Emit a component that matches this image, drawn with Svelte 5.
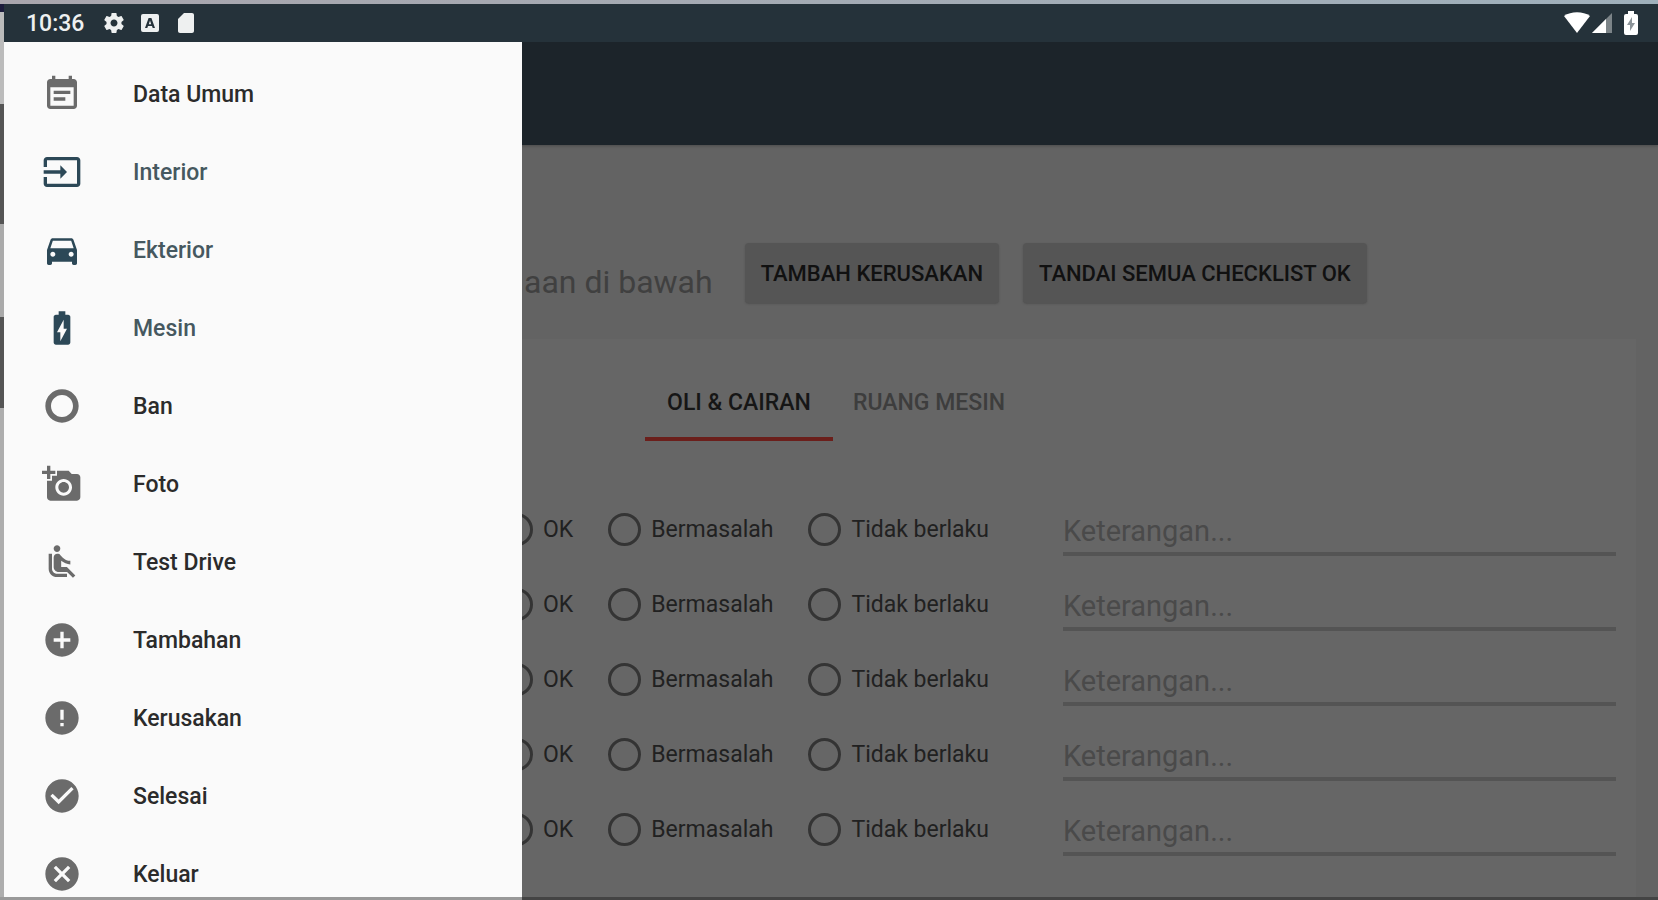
<script>
  const iconPaths = {
    note: 'M17 10H7v2h10v-2zm2-7h-1V1h-2v2H8V1H6v2H5c-1.11 0-1.99.9-1.99 2L3 19c0 1.1.89 2 2 2h14c1.1 0 2-.9 2-2V5c0-1.1-.9-2-2-2zm0 16H5V8h14v11zm-5-5H7v2h7v-2z',
    input: 'M21 3.01H3c-1.1 0-2 .9-2 2V9h2V4.99h18v14.03H3V15H1v4.01c0 1.1.9 1.98 2 1.98h18c1.1 0 2-.88 2-1.98v-14c0-1.11-.9-2-2-2zM11 16l4-4-4-4v3H1v2h10v3z',
    car: 'M18.92 6.01C18.72 5.42 18.16 5 17.5 5h-11c-.66 0-1.21.42-1.42 1.01L3 12v8c0 .55.45 1 1 1h1c.55 0 1-.45 1-1v-1h12v1c0 .55.45 1 1 1h1c.55 0 1-.45 1-1v-8l-2.08-5.99zM6.5 16c-.83 0-1.5-.67-1.5-1.5S5.67 13 6.5 13s1.5.67 1.5 1.5S7.33 16 6.5 16zm11 0c-.83 0-1.5-.67-1.5-1.5s.67-1.5 1.5-1.5 1.5.67 1.5 1.5-.67 1.5-1.5 1.5zM5 11l1.5-4.5h11L19 11H5z',
    battery: 'M15.67 4H14V2h-4v2H8.33C7.6 4 7 4.6 7 5.33v15.33C7 21.4 7.6 22 8.33 22h7.33c.74 0 1.34-.6 1.34-1.33V5.33C17 4.6 16.4 4 15.67 4zM11 20v-5.5H9L13 7v5.5h2L11 20z',
    ring: 'M12 2C6.48 2 2 6.48 2 12s4.48 10 10 10 10-4.48 10-10S17.520 2 12 2zm0 16.600c-3.650 0-6.600-2.950-6.600-6.600s2.950-6.600 6.600-6.600 6.600 2.950 6.600 6.600-2.950 6.600-6.600 6.600z',
    camera: 'M3 4V1h2v3h3v2H5v3H3V6H0V4h3zm3 6V7h3V4h7l1.83 2H21c1.1 0 2 .9 2 2v12c0 1.1-.9 2-2 2H5c-1.1 0-2-.9-2-2V10h3zm7 9c2.76 0 5-2.24 5-5s-2.24-5-5-5-5 2.24-5 5 2.24 5 5 5zm-3.2-5c0 1.77 1.43 3.2 3.2 3.2s3.2-1.43 3.2-3.2-1.43-3.2-3.2-3.2-3.2 1.43-3.2 3.2z',
    seat: 'M7.59 5.41c-.78-.78-.78-2.05 0-2.83.78-.78 2.05-.78 2.83 0 .78.78.78 2.05 0 2.83-.79.79-2.05.79-2.83 0zM6 16V7H4v9c0 2.76 2.24 5 5 5h6v-2H9c-1.66 0-3-1.34-3-3zm14 4.07L14.93 15H11.5v-3.68c1.4 1.15 3.6 2.16 5.5 2.16v-2.16c-1.66.02-3.61-.87-4.67-2.04l-1.4-1.55c-.19-.21-.43-.38-.69-.5-.29-.14-.62-.23-.96-.23h-.03C8.01 7 7 8.01 7 9.25V15c0 1.66 1.34 3 3 3h5.07l3.5 3.5L20 20.07z',
    add: 'M12 2C6.48 2 2 6.48 2 12s4.48 10 10 10 10-4.48 10-10S17.52 2 12 2zm5 11h-4v4h-2v-4H7v-2h4V7h2v4h4v2z',
    error: 'M12 2C6.48 2 2 6.48 2 12s4.48 10 10 10 10-4.48 10-10S17.52 2 12 2zm1 15h-2v-2h2v2zm0-4h-2V7h2v6z',
    check: 'M12 2C6.48 2 2 6.48 2 12s4.48 10 10 10 10-4.48 10-10S17.52 2 12 2zm-2 15l-5-5 1.41-1.41L10 14.17l7.59-7.59L19 8l-9 9z',
    cancel: 'M12 2C6.47 2 2 6.47 2 12s4.47 10 10 10 10-4.47 10-10S17.53 2 12 2zm5 13.59L15.59 17 12 13.41 8.41 17 7 15.59 10.59 12 7 8.41 8.41 7 12 10.59 15.59 7 17 8.41 13.41 12 17 15.59z',
    gear: 'M19.43 12.98c.04-.32.07-.64.07-.98s-.03-.66-.07-.98l2.11-1.65c.19-.15.24-.42.12-.64l-2-3.46c-.12-.22-.39-.3-.61-.22l-2.49 1c-.52-.4-1.08-.73-1.69-.98l-.38-2.65C14.46 2.18 14.25 2 14 2h-4c-.25 0-.46.18-.49.42l-.38 2.65c-.61.25-1.17.59-1.69.98l-2.49-1c-.23-.09-.49 0-.61.22l-2 3.46c-.13.22-.07.49.12.64l2.11 1.65c-.04.32-.07.65-.07.98s.03.66.07.98l-2.11 1.65c-.19.15-.24.42-.12.64l2 3.46c.12.22.39.3.61.22l2.49-1c.52.4 1.08.73 1.69.98l.38 2.65c.03.24.24.42.49.42h4c.25 0 .46-.18.49-.42l.38-2.65c.61-.25 1.17-.59 1.69-.98l2.49 1c.23.09.49 0 .61-.22l2-3.46c.12-.22.07-.49-.12-.64l-2.11-1.65zM12 15.5c-1.93 0-3.5-1.57-3.5-3.5s1.57-3.5 3.5-3.5 3.5 1.57 3.5 3.5-1.57 3.5-3.5 3.5z',
    sdCard: 'M18 2h-8L4 8v12c0 1.1.9 2 2 2h12c1.1 0 2-.9 2-2V4c0-1.1-.9-2-2-2z'
  };

  const menu = [
    { label: 'Data Umum', icon: 'note' },
    { label: 'Interior', icon: 'input', filled: true },
    { label: 'Ekterior', icon: 'car', filled: true },
    { label: 'Mesin', icon: 'battery', filled: true },
    { label: 'Ban', icon: 'ring' },
    { label: 'Foto', icon: 'camera' },
    { label: 'Test Drive', icon: 'seat' },
    { label: 'Tambahan', icon: 'add' },
    { label: 'Kerusakan', icon: 'error' },
    { label: 'Selesai', icon: 'check' },
    { label: 'Keluar', icon: 'cancel' }
  ];

  const tabs = ['OLI & CAIRAN', 'RUANG MESIN'];
  const options = ['OK', 'Bermasalah', 'Tidak berlaku'];

  let activeTab = $state(0);
  let rows = $state(Array.from({ length: 5 }, () => ({ status: '', note: '' })));

  function markAllOk() {
    rows.forEach((row) => (row.status = 'OK'));
  }
</script>

{#snippet icon(name)}
  <svg class="icon" viewBox="0 0 24 24" aria-hidden="true"><path d={iconPaths[name]} /></svg>
{/snippet}

<div class="window">
  <div class="screen">
    <header class="status">
      <time>10:36</time>
      <div class="notifications">
        {@render icon('gear')}
        <svg class="icon" viewBox="0 0 24 24" aria-hidden="true">
          <path fill-rule="evenodd" d="M5 3h14a2 2 0 0 1 2 2v14a2 2 0 0 1-2 2H5a2 2 0 0 1-2-2V5a2 2 0 0 1 2-2zm5.600 4L7 17h2.300l.7-2h4l.7 2H17L13.400 7zM12 9.500l1.200 3.700h-2.400z" />
        </svg>
        {@render icon('sdCard')}
      </div>
      <div class="system">
        <svg class="wifi" viewBox="0 0 26 22" aria-hidden="true"><path d="M0 4C7-1 19-1 26 4L13 21z" /></svg>
        <svg class="signal" viewBox="0 0 20 22" aria-hidden="true">
          <path d="M20 1v20H0z" opacity=".4" />
          <path d="M14 7v14H0z" />
        </svg>
        <svg class="battery" viewBox="0 0 14 24" aria-hidden="true">
          <path d="M4 0h6v3h2a2 2 0 0 1 2 2v17a2 2 0 0 1-2 2H2a2 2 0 0 1-2-2V5a2 2 0 0 1 2-2h2z" />
          <path class="bolt" d="M8 6l-5 8h3v6l5-8H8z" />
        </svg>
      </div>
    </header>

    <div class="body">
      <div class="appbar"></div>

      <main>
        <div class="heading">
          <h1>aan di bawah</h1>
          <button type="button">TAMBAH KERUSAKAN</button>
          <button type="button" onclick={markAllOk}>TANDAI SEMUA CHECKLIST OK</button>
        </div>

        <section class="card">
          <div class="tabs" role="tablist">
            {#each tabs as tab, i}
              <button
                type="button"
                role="tab"
                class:active={activeTab === i}
                aria-selected={activeTab === i}
                onclick={() => (activeTab = i)}>{tab}</button>
            {/each}
          </div>

          <div class="checklist">
            {#each rows as row, i}
              <div class="row">
                <div class="options">
                  {#each options as option}
                    <label>
                      <input type="radio" name="check-{i}" value={option} bind:group={row.status} />
                      {option}
                    </label>
                  {/each}
                </div>
                <input class="note" type="text" placeholder="Keterangan..." aria-label="Keterangan" bind:value={row.note} />
              </div>
            {/each}
          </div>
        </section>
      </main>

      <nav class="drawer">
        {#each menu as item}
          <a href="#{item.icon}" class:filled={item.filled}>
            {@render icon(item.icon)}
            <span>{item.label}</span>
          </a>
        {/each}
      </nav>
    </div>
  </div>
</div>

<style>
  :global(body) {
    margin: 0;
  }

  /* emulator window edges show around the device screen */
  .window {
    box-sizing: border-box;
    height: 100vh;
    padding: 4px 0 3px 4px;
    overflow: hidden;
    font-family: Roboto, "Liberation Sans", sans-serif;
    font-size: 23px;
    background:
      linear-gradient(90deg, #a9a6ad, #9fb0bb) top / 100% 4px no-repeat,
      linear-gradient(90deg, #999 0 522px, #444 522px) bottom / 100% 3px no-repeat,
      linear-gradient(#1c1c3c 0 12px, #bbb 12px 104px, #555 104px 224px, #aaa 224px 317px, #555 317px 408px, #adadad 408px);
  }

  .screen {
    display: flex;
    flex-direction: column;
    height: 100%;
    background: #636363;
  }

  .icon {
    flex: none;
    width: 40px;
    height: 40px;
    fill: currentColor;
  }

  .status {
    flex: none;
    display: flex;
    align-items: center;
    height: 38px;
    padding: 0 20px 0 22px;
    background: #25323a;
    color: #eef0f0;
    font-weight: 500;
  }

  .notifications {
    display: flex;
    gap: 12px;
    margin-left: 18px;
  }

  .notifications .icon {
    width: 24px;
    height: 24px;
  }

  .system {
    display: flex;
    align-items: center;
    margin-left: auto;
    fill: #fff;
  }

  .wifi {
    width: 26px;
    height: 22px;
  }

  .signal {
    width: 20px;
    height: 22px;
    margin-left: 2px;
  }

  .battery {
    width: 14px;
    height: 24px;
    margin-left: 12px;
  }

  .bolt {
    fill: #8c9499;
  }

  .body {
    position: relative;
    flex: 1;
    min-height: 0;
    overflow: hidden;
  }

  .appbar {
    height: 103px;
    background: #1c242a;
    box-shadow: 0 1px 3px #4a4a4a;
  }

  .heading {
    display: flex;
    align-items: flex-end;
    gap: 24px;
    padding: 98px 22px 36px 520px;
  }

  h1 {
    margin: 0 8px 0 0;
    font-size: 32px;
    line-height: 42px;
    font-weight: 400;
    color: #404040;
    white-space: nowrap;
  }

  button {
    border: 0;
    font: inherit;
    font-weight: 500;
    cursor: pointer;
    white-space: nowrap;
  }

  .heading button {
    height: 60px;
    padding: 0 16px;
    border-radius: 4px;
    background: #555;
    color: #111;
    font-size: 22px;
    box-shadow: 0 1px 2px #505050;
  }

  .card {
    margin: 0 22px;
    padding: 25px 20px 80px 0;
    background: #666;
  }

  .tabs {
    display: flex;
    justify-content: center;
    padding-left: 28px;
  }

  .tabs button {
    height: 77px;
    min-width: 188px;
    padding: 4px 20px 0;
    background: none;
    border-bottom: 4px solid transparent;
    color: #3d3d3d;
  }

  .tabs button.active {
    border-bottom-color: #6b1f1b;
    color: #161616;
  }

  .checklist {
    padding-top: 51px;
  }

  .row {
    display: flex;
    align-items: center;
    gap: 74px;
    height: 75px;
    padding-left: 474px;
  }

  .options {
    display: flex;
    gap: 35px;
    color: #212121;
  }

  .options label {
    display: flex;
    align-items: center;
    gap: 10px;
    white-space: nowrap;
  }

  input[type='radio'] {
    appearance: none;
    box-sizing: border-box;
    width: 33px;
    height: 33px;
    margin: 0;
    border: 3px solid #343434;
    border-radius: 50%;
  }

  input[type='radio']:checked {
    background: radial-gradient(#343434 0 8px, transparent 9px);
  }

  .note {
    flex: 1;
    min-width: 0;
    box-sizing: border-box;
    height: 52px;
    padding: 6px 0 0;
    border: 0;
    border-bottom: 4px solid #545454;
    background: none;
    color: #212121;
    font: inherit;
    font-size: 29px;
    outline: none;
  }

  .note::placeholder {
    color: #4a4a4a;
    opacity: 1;
  }

  .drawer {
    position: absolute;
    top: 0;
    bottom: 0;
    left: 0;
    box-sizing: border-box;
    width: 518px;
    padding-top: 13px;
    overflow: hidden;
    background: #fafafa;
  }

  .drawer a {
    display: flex;
    align-items: center;
    gap: 51px;
    height: 78px;
    padding-left: 38px;
    color: #6b6b6b;
    font-weight: 500;
    text-decoration: none;
  }

  .drawer span {
    color: #2b2b2b;
  }

  .drawer .filled {
    color: #2c4857;
  }

  .drawer .filled span {
    color: #46585f;
  }
</style>
